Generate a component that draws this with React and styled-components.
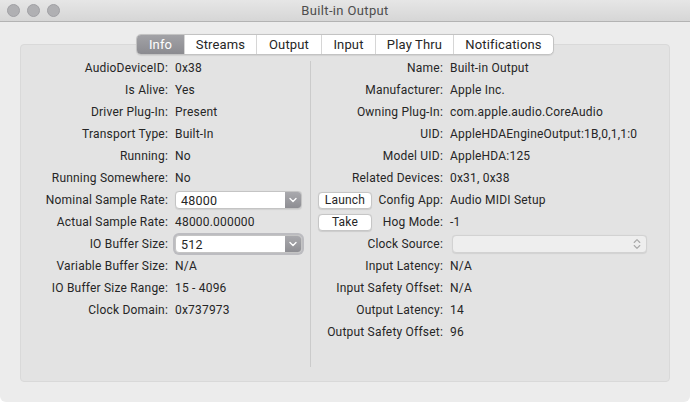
import React from 'react';
import styled, { createGlobalStyle } from 'styled-components';

const GlobalStyle = createGlobalStyle`
  html, body {
    margin: 0;
    padding: 0;
    background: #ffffff;
  }
  body {
    font-family: Roboto, 'Liberation Sans', sans-serif;
    -webkit-font-smoothing: antialiased;
  }
`;

const Window = styled.div`
  width: 690px;
  height: 402px;
  background: #ececec;
  border-radius: 0 0 6px 6px;
  display: flex;
  flex-direction: column;
  overflow: hidden;
`;

const TitleBar = styled.div`
  height: 22px;
  box-sizing: border-box;
  display: flex;
  align-items: center;
  position: relative;
  background: linear-gradient(#e6e6e6, #d6d6d6);
  border-bottom: 1px solid #b3b3b3;
`;

const Lights = styled.div`
  display: flex;
  gap: 7px;
  padding-left: 7px;
`;

const Light = styled.span`
  width: 13px;
  height: 13px;
  border-radius: 50%;
  box-sizing: border-box;
  background: #b0b0b3;
  border: 1px solid #a0a0a4;
`;

const Title = styled.div`
  position: absolute;
  left: 0;
  right: 0;
  text-align: center;
  font-size: 13px;
  letter-spacing: 0.35px;
  color: #4d4d4d;
  pointer-events: none;
`;

const Body = styled.div`
  flex: 1;
  display: flex;
  padding: 22px 20px 20px;
`;

const Panel = styled.div`
  flex: 1;
  display: flex;
  flex-direction: column;
  background: #e3e3e3;
  border: 1px solid #d9d9d9;
  border-radius: 4px;
`;

const TabGroup = styled.div`
  align-self: center;
  margin-top: -11px;
  display: flex;
  height: 21px;
  box-sizing: border-box;
  background: #ffffff;
  border: 1px solid #c3c3c3;
  border-radius: 5px;
  overflow: hidden;
  box-shadow: 0 0.5px 1px rgba(0, 0, 0, 0.08);
`;

const Tab = styled.div`
  display: flex;
  align-items: center;
  justify-content: center;
  width: ${p => p.w}px;
  box-sizing: border-box;
  font-size: 13px;
  letter-spacing: 0.15px;
  color: ${p => (p.active ? '#ffffff' : '#262626')};
  background: ${p => (p.active ? 'linear-gradient(#a2a2a6, #8b8b90)' : 'transparent')};
  & + & {
    border-left: 1px solid #d6d6d6;
  }
`;

const Columns = styled.div`
  flex: 1;
  display: flex;
  padding-top: 2px;
`;

const Column = styled.div`
  width: ${p => p.w}px;
  display: grid;
  grid-template-columns: ${p => p.label}px 1fr;
  grid-auto-rows: 22px;
  column-gap: 7px;
  align-content: start;
  font-size: 12px;
  letter-spacing: 0.2px;
  color: #262626;
`;

const Divider = styled.div`
  width: 1px;
  background: #cbcbcb;
  margin: 4px 0 14px;
`;

const Label = styled.div`
  display: flex;
  align-items: center;
  justify-content: flex-end;
  white-space: nowrap;
`;

const LabelWithButton = styled(Label)`
  justify-content: space-between;
  padding-left: 7px;
`;

const Value = styled.div`
  display: flex;
  align-items: center;
  white-space: nowrap;
`;

const PopUp = styled.div`
  width: ${p => p.w}px;
  height: 18px;
  margin-left: ${p => p.offset || 0}px;
  box-sizing: border-box;
  display: flex;
  align-items: stretch;
  background: ${p => (p.disabled ? '#eeeeee' : '#ffffff')};
  border: 1px solid ${p => (p.disabled ? '#d2d2d2' : '#c4c4c4')};
  border-radius: 4px;
  box-shadow: ${p => (p.focused ? '0 0 0 2px #bcbcc0' : '0 0.5px 1px rgba(0,0,0,0.08)')};
`;

const PopUpText = styled.div`
  flex: 1;
  display: flex;
  align-items: center;
  padding-left: 5px;
  font-size: 12.5px;
`;

const PopUpArrow = styled.div`
  width: 16px;
  display: flex;
  align-items: center;
  justify-content: center;
  border-radius: 0 3px 3px 0;
  background: linear-gradient(#a9a9ad, #8e8e93);
`;

const Stepper = styled.div`
  width: 18px;
  display: flex;
  align-items: center;
  justify-content: center;
`;

const Button = styled.div`
  width: 54px;
  height: 17px;
  box-sizing: border-box;
  display: flex;
  align-items: center;
  justify-content: center;
  background: #ffffff;
  border: 1px solid #c6c6c6;
  border-radius: 4px;
  box-shadow: 0 0.5px 1px rgba(0, 0, 0, 0.1);
  font-size: 12px;
  color: #262626;
`;

const ChevronDown = () => (
  <svg width="8" height="6" viewBox="0 0 8 6">
    <path d="M1 1.5 L4 4.5 L7 1.5" fill="none" stroke="#ffffff" strokeWidth="1.4" strokeLinecap="round" strokeLinejoin="round" />
  </svg>
);

const UpDown = () => (
  <svg width="8" height="12" viewBox="0 0 8 12">
    <path d="M1.2 4.5 L4 1.7 L6.8 4.5 M1.2 7.5 L4 10.3 L6.8 7.5" fill="none" stroke="#a8a8a8" strokeWidth="1.1" strokeLinecap="round" strokeLinejoin="round" />
  </svg>
);

const tabs = [
  { name: 'Info', w: 47 },
  { name: 'Streams', w: 72 },
  { name: 'Output', w: 65 },
  { name: 'Input', w: 54 },
  { name: 'Play Thru', w: 78 },
  { name: 'Notifications', w: 100 },
];

const left = [
  ['AudioDeviceID:', '0x38'],
  ['Is Alive:', 'Yes'],
  ['Driver Plug-In:', 'Present'],
  ['Transport Type:', 'Built-In'],
  ['Running:', 'No'],
  ['Running Somewhere:', 'No'],
  ['Nominal Sample Rate:', { popup: '48000' }],
  ['Actual Sample Rate:', '48000.000000'],
  ['IO Buffer Size:', { popup: '512', focused: true }],
  ['Variable Buffer Size:', 'N/A'],
  ['IO Buffer Size Range:', '15 - 4096'],
  ['Clock Domain:', '0x737973'],
];

const right = [
  ['Name:', 'Built-in Output'],
  ['Manufacturer:', 'Apple Inc.'],
  ['Owning Plug-In:', 'com.apple.audio.CoreAudio'],
  ['UID:', 'AppleHDAEngineOutput:1B,0,1,1:0'],
  ['Model UID:', 'AppleHDA:125'],
  ['Related Devices:', '0x31, 0x38'],
  ['Config App:', 'Audio MIDI Setup', 'Launch'],
  ['Hog Mode:', '-1', 'Take'],
  ['Clock Source:', { stepper: true }],
  ['Input Latency:', 'N/A'],
  ['Input Safety Offset:', 'N/A'],
  ['Output Latency:', '14'],
  ['Output Safety Offset:', '96'],
];

function renderValue(value) {
  if (typeof value === 'string') return value;
  if (value.stepper) {
    return (
      <PopUp w={195} offset={2} disabled>
        <PopUpText />
        <Stepper>
          <UpDown />
        </Stepper>
      </PopUp>
    );
  }
  return (
    <PopUp w={127} focused={value.focused}>
      <PopUpText>{value.popup}</PopUpText>
      <PopUpArrow>
        <ChevronDown />
      </PopUpArrow>
    </PopUp>
  );
}

function Rows({ items }) {
  return items.map(([label, value, button]) => (
    <React.Fragment key={label}>
      {button ? (
        <LabelWithButton>
          <Button>{button}</Button>
          {label}
        </LabelWithButton>
      ) : (
        <Label>{label}</Label>
      )}
      <Value>{renderValue(value)}</Value>
    </React.Fragment>
  ));
}

export default function App() {
  return (
    <>
      <GlobalStyle />
      <Window>
        <TitleBar>
          <Lights>
            <Light />
            <Light />
            <Light />
          </Lights>
          <Title>Built-in Output</Title>
        </TitleBar>
        <Body>
          <Panel>
            <TabGroup>
              {tabs.map((t, i) => (
                <Tab key={t.name} w={t.w} active={i === 0}>
                  {t.name}
                </Tab>
              ))}
            </TabGroup>
            <Columns>
              <Column w={289} label={147}>
                <Rows items={left} />
              </Column>
              <Divider />
              <Column w={358} label={132}>
                <Rows items={right} />
              </Column>
            </Columns>
          </Panel>
        </Body>
      </Window>
    </>
  );
}
